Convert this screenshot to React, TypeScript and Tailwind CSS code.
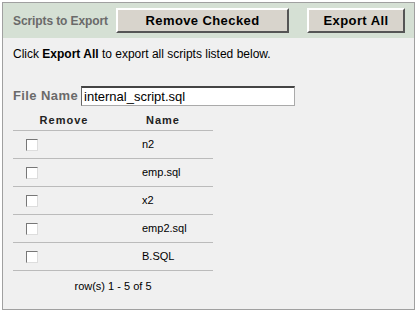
const ROWS = ["n2", "emp.sql", "x2", "emp2.sql", "B.SQL"];

function Btn({ label, width }: { label: string; width: string }) {
  return (
    <button
      className={`${width} h-[25px] shrink-0 bg-[#d8d4cc] border-t-[2px] border-l-[2px] border-t-white border-l-white border-b-[2px] border-r-[2px] border-b-[#555] border-r-[#555] text-[13px] font-bold text-black tracking-[0.4px]`}
    >
      {label}
    </button>
  );
}

export default function App() {
  return (
    <div className="w-[417px] h-[314px] bg-white p-[2px]" style={{ fontFamily: '"Liberation Sans", Arial, sans-serif' }}>
      <div className="w-[413px] h-[308px] border border-[#a0a0a0] bg-[#f0f0f0] flex flex-col">
        <div className="h-[35px] bg-[#d5e0d4] flex items-center pl-[10px] shrink-0">
          <span className="text-[12px] font-bold text-[#6a6a6a] w-[103px] shrink-0 whitespace-nowrap tracking-[-0.1px]">Scripts to Export</span>
          <Btn label="Remove Checked" width="w-[173px]" />
          <div className="w-[18px] shrink-0" />
          <Btn label="Export All" width="w-[98px]" />
        </div>
        <div className="pl-[10px] pt-[8px]">
          <p className="text-[12px] text-black leading-[16px]">
            Click <b>Export All</b> to export all scripts listed below.
          </p>
          <div className="flex items-center mt-[24px]">
            <span className="text-[13px] font-bold text-[#6a6a6a] tracking-[0.4px] mr-[3px]">File Name</span>
            <input
              readOnly
              value="internal_script.sql"
              className="w-[214px] h-[20px] bg-white border border-[#aaa] border-t-[2px] border-t-[#444] border-l-[#666] px-[2px] text-[13px] text-black outline-none"
            />
          </div>
          <div className="w-[200px] mt-[1px]">
            <div className="flex h-[24px] items-center pt-[3px] border-b border-[#bbb] text-[11px] font-bold text-[#222] tracking-[1px]">
              <span className="w-[102px] text-center">Remove</span>
              <span className="w-[96px] text-center">Name</span>
            </div>
            {ROWS.map((r) => (
              <div key={r} className="flex h-[28px] items-center border-b border-[#bbb]">
                <div className="w-[102px] pl-[13px]">
                  <div className="w-[12px] h-[12px] bg-white border border-t-[#777] border-l-[#777] border-b-[#ddd] border-r-[#ddd]" />
                </div>
                <span className="text-[11px] text-black pl-[27px]">{r}</span>
              </div>
            ))}
            <div className="h-[30px] flex items-center justify-center text-[11px] text-black">row(s) 1 - 5 of 5</div>
          </div>
        </div>
      </div>
    </div>
  );
}
